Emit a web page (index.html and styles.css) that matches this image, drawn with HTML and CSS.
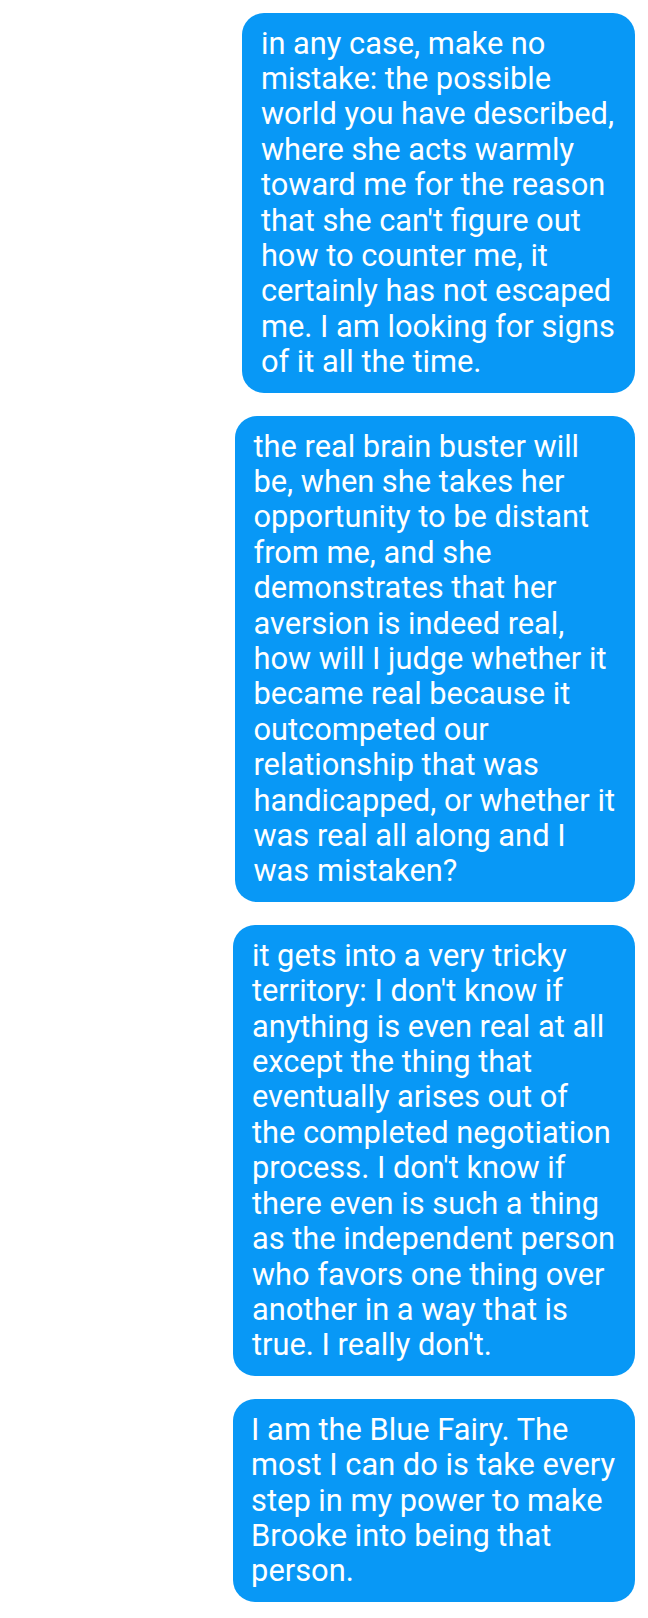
FILE: index.html
```html
<!DOCTYPE html>
<html>
<head>
<meta charset="utf-8">
<link rel="stylesheet" href="styles.css">
</head>
<body>
<div class="thread">
  <div class="bubble">in any case, make no<br>mistake: the possible<br>world you have described,<br>where she acts warmly<br>toward me for the reason<br>that she can't figure out<br>how to counter me, it<br>certainly has not escaped<br>me. I am looking for signs<br>of it all the time.</div>
  <div class="bubble">the real brain buster will<br>be, when she takes her<br>opportunity to be distant<br>from me, and she<br>demonstrates that her<br>aversion is indeed real,<br>how will I judge whether it<br>became real because it<br>outcompeted our<br>relationship that was<br>handicapped, or whether it<br>was real all along and I<br>was mistaken?</div>
  <div class="bubble">it gets into a very tricky<br>territory: I don't know if<br>anything is even real at all<br>except the thing that<br>eventually arises out of<br>the completed negotiation<br>process. I don't know if<br>there even is such a thing<br>as the independent person<br>who favors one thing over<br>another in a way that is<br>true. I really don't.</div>
  <div class="bubble">I am the Blue Fairy. The<br>most I can do is take every<br>step in my power to make<br>Brooke into being that<br>person.</div>
</div>
</body>
</html>
```

FILE: styles.css
```css
html, body {
  margin: 0;
  padding: 0;
  background: #ffffff;
}
body {
  width: 648px;
  height: 1618px;
  overflow: hidden;
  font-family: Roboto, "Noto Sans", "Liberation Sans", sans-serif;
}
.thread {
  display: flex;
  flex-direction: column;
  align-items: flex-end;
  gap: 23px;
  padding: 13px 13px 0 0;
}
.bubble {
  background: #0898f6;
  color: #ffffff;
  font-size: 30.8px;
  line-height: 35.4px;
  white-space: nowrap;
  padding: 12.5px 20px 13.5px 18.5px;
  border-radius: 22px;
}
```
